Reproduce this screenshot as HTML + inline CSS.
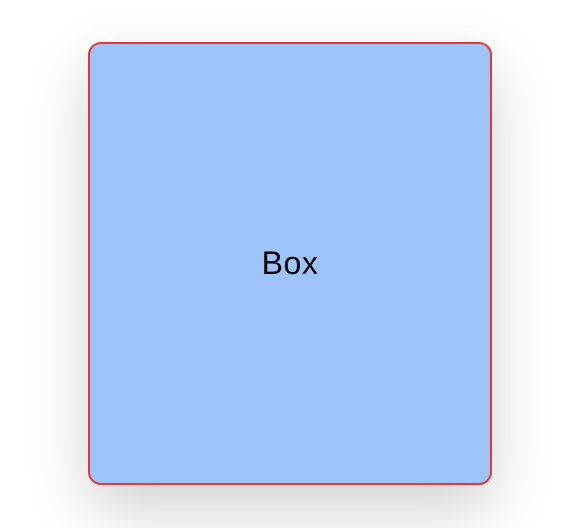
<!DOCTYPE html>
<html><head><style>
html,body{margin:0;padding:0;width:580px;height:528px;background:#fff;overflow:hidden}
.box{position:absolute;left:88px;top:42px;width:400px;height:439px;border:2px solid #e53935;border-radius:13px;background:#9dc3f8;box-shadow:0 24px 60px rgba(0,0,0,0.18);display:flex;align-items:center;justify-content:center;font-family:"Liberation Sans",sans-serif;font-size:32px;color:#000;letter-spacing:0.5px}
</style></head><body>
<div class="box"><span>Box</span></div>
</body></html>
